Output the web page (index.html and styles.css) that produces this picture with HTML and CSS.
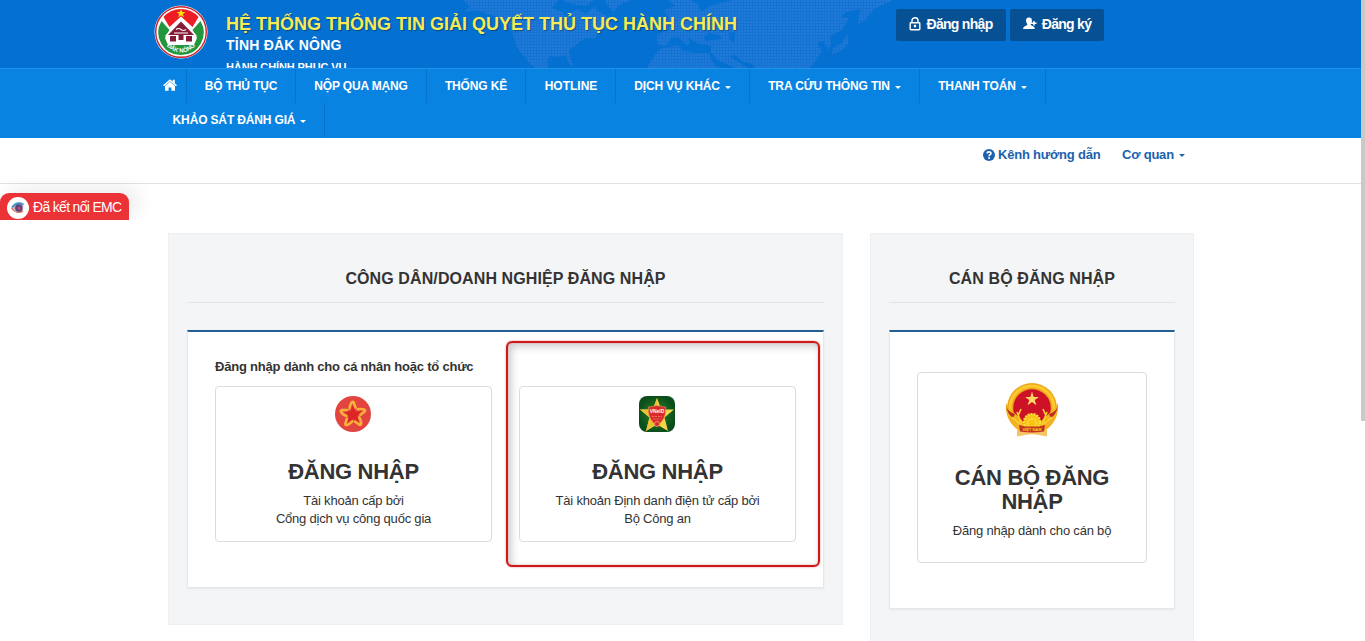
FILE: index.html
```html
<!DOCTYPE html>
<html lang="vi">
<head>
    <meta charset="UTF-8">
    <meta name="viewport" content="width=device-width, initial-scale=1.0">
    <title>Đăng nhập</title>
    <link rel="stylesheet" href="styles.css">
</head>
<body>
    <div class="header">
        <svg class="map" width="450" height="68" viewBox="0 0 450 68">
            <defs>
                <pattern id="dots" width="3" height="3" patternUnits="userSpaceOnUse">
                    <rect width="3" height="3" fill="#1672d2"/>
                    <rect width="2" height="2" fill="#207bd7"/>
                </pattern>
            </defs>
            <g fill="url(#dots)">
                <path d="M13 0 20 7 14 12 25 10 38 14 51 18 60 27 64 38 66 45 70 52 76 58 80 64 86 68H98L97 60 101 56 110 57 116 55 119 64 123 67 120 56 119 50 126 45 135 38 145 38 150 30 163 28 156 15 149 12 144 7 136 14 128 9 122 12 115 18 113 12 102 8 108 0Z"/>
                <path d="M155 0 158 6 164 12 169 5 181 0Z"/>
                <path d="M112 0 122 4 136 6 144 0Z"/>
                <path d="M197 68 202 59 210 49 228 45 232 50 244 53 258 53 264 61 270 68Z"/>
                <path d="M218 0 225 6 214 10 219 18 213 25 218 30 207 35 208 45 216 46 221 38 229 37 237 46 240 42 237 36 247 43 261 46 261 53 269 61 286 68H360L372 51 367 43 374 41 378 50 381 45 380 36 392 30 399 18 391 17 396 12 410 9 408 24 415 20 424 9 443 0H283L262 5 251 12 248 4 240 0Z"/>
                <path d="M382 55 383 48 392 43 397 34 399 43 393 49Z"/>
                <path d="M204 28 208 17 213 23 212 29Z"/>
            </g>
            <g fill="#0470d1">
                <path d="M254 38 258 33 270 35 272 39 256 41Z"/>
                <path d="M279 33 285 32 284 43 280 40Z"/>
                <path d="M279 56 285 55 293 62 303 64 305 68H298L288 62Z"/>
                <path d="M261 54 268 65 267 68 260 58Z"/>
            </g>
        </svg>
        <svg class="logo" width="54" height="54" viewBox="0 0 54 54">
            <circle cx="27" cy="27" r="26.500" fill="#fff"/>
            <circle cx="27" cy="27" r="25.300" fill="#fff" stroke="#c9252c" stroke-width="1.400"/>
            <path d="M9.500 12A23 23 0 0 1 44.500 12L38.500 22 27 11.500 15.500 22Z" fill="#ee1c25"/>
            <path d="M27 4l1.200 3h3.200l-2.600 2 1 3.200-2.800-1.900-2.800 1.900 1-3.200-2.600-2h3.200z" fill="#ffe600"/>
            <path d="M7.500 16 15.500 25 11 33 14 40H40L43 33 38.500 25 46.500 16A22.500 22.500 0 0 1 27 50 22.500 22.500 0 0 1 7.500 16Z" fill="#23963d"/>
            <path d="M27 12 43 31 40 33V39H14V33L11 31Z" fill="#fff"/>
            <path d="M27 16.500 40 30H14Z" fill="#841c38"/>
            <path d="M16 31H22V36.500H16ZM32 31H38V36.500H32ZM24.500 30H29.500V35H24.500Z" fill="#841c38"/>
            <path d="M20 28H34M22 24.500Q24.500 22.500 27 24.500T32 24.500" fill="none" stroke="#fff" stroke-width="1.200"/>
            <path id="arc" d="M12 40.500Q27 54.500 42 40.500" fill="none"/>
            <text class="logo-text"><textPath href="#arc" startOffset="50%" text-anchor="middle">ĐẮK NÔNG</textPath></text>
        </svg>
        <div class="brand">
            <h1>HỆ THỐNG THÔNG TIN GIẢI QUYẾT THỦ TỤC HÀNH CHÍNH</h1>
            <h2>TỈNH ĐẮK NÔNG</h2>
            <p>HÀNH CHÍNH PHỤC VỤ</p>
        </div>
        <div class="account">
            <a class="account-btn login">
                <svg width="12" height="14" viewBox="0 0 12 14" fill="none" stroke="#fff"><path d="M3 5.500V3.500A3 2.700 0 0 1 9 3.500V5.500" stroke-width="1.400"/><rect x="1.200" y="5.700" width="9.600" height="7" rx=".7" stroke-width="1.400"/><path d="M6 7.800V10.300" stroke-width="2.200"/></svg>
                Đăng nhập
            </a>
            <a class="account-btn register">
                <svg width="14" height="13" viewBox="0 0 14 13" fill="#fff"><path d="M6 .5C8.600.5 9.300 2.400 8.900 4.500 8.600 6 7.700 6.600 7.700 7.500 7.700 8.900 11.500 8.700 12 12H0C.5 8.700 4.300 8.900 4.300 7.500 4.300 6.600 3.400 6 3.100 4.500 2.700 2.400 3.400.5 6 .5Z"/><path d="M10.200 4H11.700V5.500H13.500V7H11.700V8.500H10.200V7H8V5.500H10.200Z"/></svg>
                Đăng ký
            </a>
        </div>
    </div>
    <div class="nav">
        <a class="nav-item home"><svg width="14" height="12" viewBox="0 0 14 12" fill="#fff"><path d="M7 .2 9.700 2.500V.8H11.800V4.300L14 6.200 13 7.300 7 2.300 1 7.300 0 6.200Z"/><path d="M7 2.800 12 7V11.700H8.400V8.400H5.600V11.700H2V7Z"/></svg></a>
        <a class="nav-item n1">BỘ THỦ TỤC</a>
        <a class="nav-item n2">NỘP QUA MẠNG</a>
        <a class="nav-item n3">THỐNG KÊ</a>
        <a class="nav-item n4">HOTLINE</a>
        <a class="nav-item n5">DỊCH VỤ KHÁC<i class="caret"></i></a>
        <a class="nav-item n6">TRA CỨU THÔNG TIN<i class="caret"></i></a>
        <a class="nav-item n7">THANH TOÁN<i class="caret"></i></a>
        <a class="nav-item n8">KHẢO SÁT ĐÁNH GIÁ<i class="caret"></i></a>
    </div>
    <div class="subnav">
        <a class="guide"><svg width="12" height="12" viewBox="0 0 12 12"><circle cx="6" cy="6" r="6" fill="#1b62ae"/><path d="M4 4.400C4.200 2.200 8 2.300 7.900 4.400 7.800 5.700 6.100 5.700 6.100 7.300" fill="none" stroke="#fff" stroke-width="1.700"/><rect x="5.200" y="8.200" width="1.800" height="1.700" fill="#fff"/></svg><span>Kênh hướng dẫn</span></a>
        <a class="agency"><span>Cơ quan</span><i class="caret"></i></a>
    </div>
    <div class="emc">
        <span class="emc-icon"><svg width="14" height="12" viewBox="0 0 14 12"><path d="M1 6C4 1 9 0 12.500 3L12 9C8 12 4 10.500 1 6Z" fill="#c9b3cf"/><path d="M1 5.500C4 1 8.500.5 12.500 2.500" fill="none" stroke="#3f8fc5" stroke-width="1.800"/><path d="M.5 6C3.500 10.500 8 11.500 12 9" fill="none" stroke="#d97a5d" stroke-width="1.500"/><circle cx="7.800" cy="6" r="3.700" fill="#54437f"/><circle cx="8.200" cy="6.200" r="1.800" fill="#b8486f"/></svg></span>
        <span class="emc-text">Đã kết nối EMC</span>
    </div>
    <div class="content">
        <div class="panel citizen">
            <h3>CÔNG DÂN/DOANH NGHIỆP ĐĂNG NHẬP</h3>
            <div class="box">
                <p class="note">Đăng nhập dành cho cá nhân hoặc tổ chức</p>
                <div class="cards">
                    <a class="card">
                        <svg width="36" height="36" viewBox="0 0 36 36">
                            <circle cx="18" cy="18" r="18" fill="#e2443f"/>
                            <path d="M18 9 20.500 15.500 27 15.500 22 20 24 27 18 23 12 27 14 20 9 15.500 15.500 15.500Z" fill="#dd2526"/>
                            <g fill="none" stroke-linecap="round">
                                <path id="petal" d="M14.500 12.500C15 8.500 17 4.500 18.600 6.200L20.500 11.500" stroke="#fbb03a" stroke-width="2.600"/>
                                <use href="#petal" transform="rotate(72 18 18.500)"/>
                                <use href="#petal" transform="rotate(144 18 18.500)"/>
                                <use href="#petal" transform="rotate(216 18 18.500)"/>
                                <use href="#petal" transform="rotate(288 18 18.500)"/>
                            </g>
                        </svg>
                        <h4>ĐĂNG NHẬP</h4>
                        <p>Tài khoản cấp bởi<br>Cổng dịch vụ công quốc gia</p>
                    </a>
                    <a class="card">
                        <svg width="36" height="36" viewBox="0 0 36 36">
                            <defs><radialGradient id="green"><stop offset="0" stop-color="#2d8a24"/><stop offset="1" stop-color="#0b4e1b"/></radialGradient></defs>
                            <rect width="36" height="36" rx="8" fill="url(#green)"/>
                            <path d="M18 2 22.200 13.500H35L25.500 21.500 29 35 18 28.500 7 35 10.500 21.500 1 13.500H13.800Z" fill="#f6d548"/>
                            <path d="M18 2V28L7 35 10.500 21.500 1 13.500H13.800Z" fill="#ecc035"/>
                            <path d="M18 9.500C21 10 24 11 26.500 11 27.500 20 23.500 26 18 30 12.500 26 8.500 20 9.500 11 12 11 15 10 18 9.500Z" fill="#d92a2e" stroke="#f19a50" stroke-width=".6"/>
                            <text x="18" y="17" class="vneid">VNeID</text>
                            <path d="M13 20.500H23M14.500 23H21.500" stroke="#f08a5c" stroke-width=".8" stroke-dasharray="2 1"/>
                            <circle cx="18" cy="28" r="2.500" fill="#d92a2e" stroke="#f2a25a" stroke-width=".8"/>
                        </svg>
                        <h4>ĐĂNG NHẬP</h4>
                        <p>Tài khoản Định danh điện tử cấp bởi<br>Bộ Công an</p>
                    </a>
                </div>
                <div class="highlight"></div>
            </div>
        </div>
        <div class="panel officer">
            <h3>CÁN BỘ ĐĂNG NHẬP</h3>
            <div class="box">
                <a class="card">
                    <svg width="54" height="56" viewBox="0 0 54 56">
                        <circle cx="27" cy="26" r="25" fill="#efa51e"/>
                        <circle cx="27" cy="26" r="22" fill="none" stroke="#fbcb2d" stroke-width="3"/>
                        <circle cx="27" cy="26" r="18.800" fill="#cd1126"/>
                        <path d="M27 9.500 28.700 14.900H34L29.700 18.100 31.400 23.300 27 20 22.600 23.300 24.300 18.100 20 14.900H25.300Z" fill="#fbd967"/>
                        <path d="M1 21C5 30 12 31 20 42V48H13C5 42 0 34 1 21ZM53 21C49 30 42 31 34 42V48H41C49 42 54 34 53 21Z" fill="#f4b223"/>
                        <path d="M1 24C3 29 6 31 10 32L8 36C4 33 2 29 1 24ZM53 24C51 29 48 31 44 32L46 36C50 33 52 29 53 24Z" fill="#b82a1e"/>
                        <path d="M17 43 12 30M13 34 16 27M37 43 42 30M41 34 38 27M7 35 15 42M47 35 39 42" stroke="#fbd12d" stroke-width="1.600"/>
                        <circle cx="27" cy="40" r="8" fill="#f9c415" stroke="#fbdf3b" stroke-width="2.200" stroke-dasharray="2 1"/>
                        <circle cx="27" cy="41" r="4.300" fill="none" stroke="#f9e050"/>
                        <path d="M12 48V54.500L20 53 27 52 34 53 42 54.500V48Z" fill="#f6c465"/>
                        <path d="M14 43 20 44.500H34L40 43 39 49.500Q27 51.500 15 49.500Z" fill="#c5321d"/>
                        <text x="27" y="48.800" class="emblem-text">VIỆT NAM</text>
                    </svg>
                    <h4>CÁN BỘ ĐĂNG<br>NHẬP</h4>
                    <p>Đăng nhập dành cho cán bộ</p>
                </a>
            </div>
        </div>
    </div>
    <div class="scrollbar"></div>
</body>
</html>
```
FILE: styles.css
```css
* {
    box-sizing: border-box;
}
body {
    font-family: "Liberation Sans", Arial, sans-serif;
    font-size: 13px;
    color: #333;
    background-color: #fff;
    margin: 0;
    height: 641px;
    overflow: hidden;
    position: relative;
}
h1, h2, h3, h4, p {
    margin: 0;
}
svg {
    display: block;
    flex-shrink: 0;
}
.header {
    position: relative;
    display: flex;
    height: 68px;
    padding-left: 154px;
    background-color: #0470d1;
    overflow: hidden;
}
.map {
    position: absolute;
    left: 450px;
    top: 0;
}
.logo {
    margin-top: 5px;
}
.logo-text {
    font-size: 6px;
    font-weight: bold;
    fill: #fff;
}
.brand {
    position: relative;
    width: 670px;
    margin-left: 18px;
    padding-top: 13px;
    color: #fff;
    white-space: nowrap;
}
.brand h1 {
    font-size: 18px;
    line-height: 22px;
    color: #f6ea56;
    text-shadow: 1px 1px 1px rgba(0, 0, 0, 0.35);
}
.brand h2 {
    font-size: 14px;
    line-height: 20px;
    letter-spacing: 0.22px;
}
.brand p {
    font-size: 11px;
    font-weight: bold;
    line-height: 14px;
    letter-spacing: -0.1px;
    margin-top: 5px;
}
.account {
    position: relative;
    display: flex;
    gap: 4px;
    padding-top: 9px;
}
.account-btn {
    display: flex;
    align-items: center;
    justify-content: center;
    gap: 5px;
    height: 32px;
    padding-bottom: 3px;
    background-color: #065094;
    border-radius: 2px;
    color: #fff;
    font-size: 14px;
    font-weight: bold;
    letter-spacing: -0.7px;
    white-space: nowrap;
}
.login {
    width: 110px;
}
.register {
    width: 94px;
}
.nav {
    display: flex;
    flex-wrap: wrap;
    align-content: flex-start;
    height: 70px;
    padding: 0 300px 0 154px;
    background-color: #0883e1;
    border-top: 1px solid #2192ea;
}
.nav-item {
    display: flex;
    align-items: center;
    justify-content: center;
    height: 34px;
    border-right: 1px solid #0673c9;
    color: #fff;
    font-size: 12px;
    font-weight: bold;
    letter-spacing: -0.15px;
    white-space: nowrap;
}
.home {
    width: 33px;
    padding-bottom: 3px;
}
.n1 {
    width: 109px;
}
.n2 {
    width: 131px;
}
.n3 {
    width: 99px;
}
.n4 {
    width: 90px;
    letter-spacing: 0;
    padding-left: 1px;
}
.n5 {
    width: 134px;
}
.n6 {
    width: 170px;
}
.n7 {
    width: 126px;
}
.n8 {
    width: 171px;
    border-left: 1px solid #1180d8;
}
.caret {
    margin: 2px 0 0 5px;
    border: 3px solid transparent;
    border-top-color: currentColor;
    border-bottom: 0;
}
.subnav {
    display: flex;
    height: 46px;
    padding: 8px 0 0 983px;
    border-bottom: 1px solid #e1e1e1;
    color: #1b62ae;
    font-size: 13px;
    font-weight: bold;
    line-height: 17px;
    letter-spacing: -0.2px;
    white-space: nowrap;
}
.guide, .agency {
    display: flex;
    align-items: center;
    height: 17px;
}
.guide {
    width: 139px;
    gap: 3px;
}
.emc {
    display: flex;
    align-items: center;
    width: 129px;
    height: 27px;
    margin-top: 9px;
    padding: 2px 0 0 7px;
    background-color: #eb3237;
    border-radius: 9px 9px 0 0;
    box-shadow: 9px -5px 18px rgba(0, 0, 0, 0.08);
    clip-path: inset(-25px -30px 0 0);
    color: #fff;
    font-size: 14px;
    white-space: nowrap;
}
.emc-icon {
    display: flex;
    align-items: center;
    justify-content: center;
    width: 22px;
    height: 22px;
    margin-right: 4px;
    background-color: #fff;
    border-radius: 50%;
}
.emc-text {
    padding-bottom: 2px;
    letter-spacing: -0.68px;
}
.content {
    display: flex;
    align-items: flex-start;
    gap: 27px;
    padding: 13px 0 0 168px;
}
.panel {
    padding: 0 18px;
    background-color: #f4f5f7;
    border: 1px solid #eeeff1;
}
.citizen {
    width: 675px;
    height: 392px;
}
.officer {
    width: 324px;
    height: 420px;
}
.panel h3 {
    height: 69px;
    padding-top: 35px;
    border-bottom: 1px solid #e3e4e6;
    font-size: 16px;
    line-height: 20px;
    letter-spacing: 0.1px;
    text-align: center;
    white-space: nowrap;
}
.box {
    position: relative;
    margin-top: 27px;
    padding: 0 27px;
    background-color: #fff;
    border: 1px solid #e6e7e9;
    border-top: 2px solid #235f94;
    box-shadow: 0 1px 2px rgba(0, 0, 0, 0.06);
}
.citizen .box {
    height: 258px;
}
.officer .box {
    height: 279px;
    padding-top: 40px;
}
.note {
    padding-top: 26px;
    font-size: 13px;
    font-weight: bold;
    line-height: 18px;
    letter-spacing: -0.21px;
    height: 54px;
    white-space: nowrap;
}
.cards {
    display: flex;
    gap: 27px;
}
.card {
    display: flex;
    flex-direction: column;
    align-items: center;
    width: 277px;
    height: 156px;
    padding-top: 9px;
    border: 1px solid #dcdcdc;
    border-radius: 4px;
    text-align: center;
    white-space: nowrap;
}
.cards svg {
    margin-right: 1px;
}
.officer .card {
    width: 230px;
    height: 191px;
}
.card h4 {
    margin: 28px 0 8px;
    font-size: 22px;
    line-height: 24px;
    letter-spacing: -0.3px;
}
.card p {
    line-height: 18px;
    letter-spacing: -0.2px;
}
.vneid {
    font-size: 5px;
    font-weight: bold;
    fill: #fff;
    text-anchor: middle;
}
.emblem-text {
    font-size: 4px;
    font-weight: bold;
    fill: #fbd12d;
    text-anchor: middle;
}
/* red frame around the electronic ID card */
.highlight {
    position: absolute;
    left: 318px;
    top: 9px;
    width: 314px;
    height: 226px;
    border: 2px solid #cc1a1c;
    border-radius: 6px;
    box-shadow: 0 0 2px rgba(220, 30, 30, 0.6), inset 0 0 1px #e33, inset 3px 3px 8px rgba(0, 0, 0, 0.22);
}
.scrollbar {
    position: absolute;
    top: 0;
    right: 0;
    width: 4px;
    height: 421px;
    background-color: #c9c9c9;
}
```
